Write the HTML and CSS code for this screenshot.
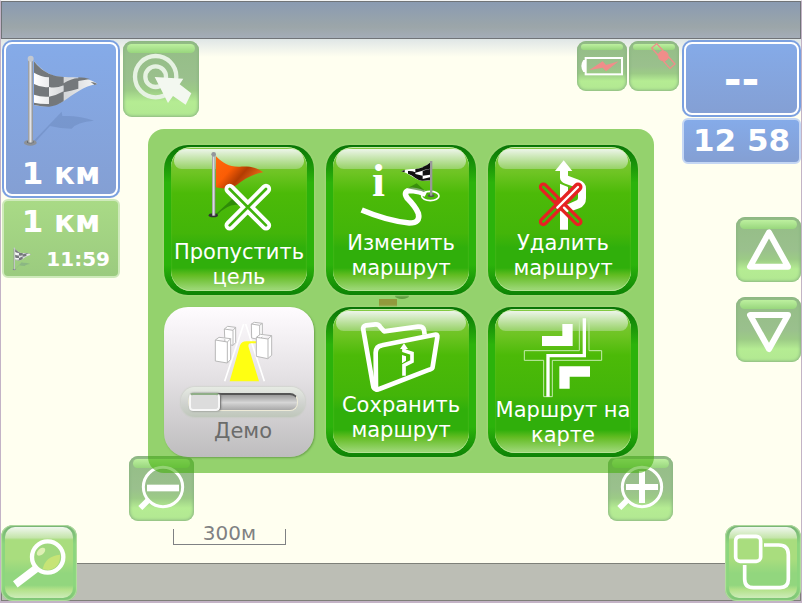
FILE: index.html
```html
<!DOCTYPE html>
<html lang="ru">

<head>
    <meta charset="UTF-8">
    <meta name="viewport" content="width=device-width, initial-scale=1.0">
    <title>Навигатор</title>
    <link rel="stylesheet" href="styles.css">
</head>

<body>
    <svg class="defs" aria-hidden="true">
        <defs>
            <linearGradient id="pole" x1="0" x2="1" y1="0" y2="0">
                <stop offset="0" stop-color="#8c9094" />
                <stop offset="0.5" stop-color="#e4e4e6" />
                <stop offset="1" stop-color="#85898d" />
            </linearGradient>
            <linearGradient id="orange" x1="0" x2="1" y1="0" y2="0.6">
                <stop offset="0" stop-color="#ff6a0c" />
                <stop offset="0.4" stop-color="#fb5d05" />
                <stop offset="0.65" stop-color="#b23c02" />
                <stop offset="1" stop-color="#f0721c" />
            </linearGradient>
            <linearGradient id="cloth" x1="0" x2="1" y1="0" y2="0">
                <stop offset="0" stop-color="#ffffff" />
                <stop offset="0.5" stop-color="#d4d6d8" />
                <stop offset="1" stop-color="#f6f6f6" />
            </linearGradient>
            <symbol id="race-flag" viewBox="66 160 234 285">
                <path d="M98 426 L185 335 L187 348 Q240 346 282 362 Q230 366 215 386 Q180 386 150 378 L104 428Z" fill="#48618f" opacity="0.2" />
                <ellipse cx="91" cy="428" rx="19" ry="9" fill="#8d9196" />
                <ellipse cx="91" cy="426" rx="10" ry="4" fill="#565c62" />
                <rect x="84" y="176" width="15" height="252" fill="url(#pole)" />
                <circle cx="92" cy="176" r="9" fill="#c3c8d0" />
                <path d="M102 184 C120 204 138 220 165 229 C205 236 255 224 292 252 C250 258 220 284 190 304 C165 320 130 322 102 315Z" fill="url(#cloth)" />
                <path d="M102 184 Q122 210 147 221 L147 232 Q122 230 102 218Z M147 221 Q168 231 191 231 L191 256 Q168 266 147 261Z M102 252 Q124 264 147 261 L147 290 Q124 292 102 284Z M147 290 Q170 286 191 274 L191 303 Q170 318 147 320Z M191 250 Q212 236 235 234 L235 266 Q212 272 191 277Z M235 232 Q256 232 270 237 Q254 240 235 243Z M272 246 Q284 246 292 252 L284 255Z M102 308 Q124 313 147 312 L147 320 Q124 320 102 315Z" fill="#74787b" />
            </symbol>
        </defs>
    </svg>

    <div class="screen">
        <header class="top-bar"></header>

        <main class="map">
            <svg class="map-objects" width="40" height="20" viewBox="0 0 40 20" aria-hidden="true">
                <rect x="1" y="7" width="18" height="13" fill="#fb8080" />
                <ellipse cx="24" cy="4" rx="7" ry="3" fill="#8a8a8a" />
            </svg>

            <div class="map-top">
                <section class="route-info">
                    <div class="card framed target-card">
                        <svg class="target-flag" viewBox="6 120 354 351"><use href="#race-flag" x="66" y="160" width="234" height="285" /></svg>
                        <div class="big">1 км</div>
                    </div>
                    <div class="card green finish-card">
                        <div class="big">1 км</div>
                        <div class="arrival">
                            <svg class="arrival-flag"><use href="#race-flag" /></svg>
                            <span>11:59</span>
                        </div>
                    </div>
                </section>

                <button class="glass" aria-label="Цель">
                    <svg width="76" height="76" viewBox="369 123 228 228">
                        <g fill="none" stroke="#e6f2e2" stroke-width="13">
                            <circle cx="467" cy="230" r="62" />
                            <circle cx="467" cy="230" r="31" />
                        </g>
                        <path d="M464 231 L550 236 L539 253 L574 280 L557 314 L519 288 L504 309Z" fill="#f3f8f0" />
                    </svg>
                </button>

                <div class="status">
                    <button class="glass" aria-label="Батарея">
                        <svg width="50" height="50" viewBox="51 123 150 150">
                            <rect x="77" y="174" width="109" height="49" fill="none" stroke="#fff" stroke-width="6" />
                            <path d="M78 180 H70 Q58 198 70 216 H78Z" fill="#fff" />
                            <path d="M87 211 L128 184 L138 195 L176 184 L138 214 L128 203Z" fill="#f08d8a" />
                        </svg>
                    </button>
                    <button class="glass" aria-label="Спутники">
                        <svg width="50" height="50" viewBox="207 123 150 150">
                            <g transform="rotate(48 310 168)" fill="none" stroke="#f08d8a" stroke-width="4">
                                <rect x="269" y="158" width="28" height="20" />
                                <rect x="323" y="158" width="28" height="20" />
                                <circle cx="310" cy="168" r="14" fill="#f08d8a" />
                            </g>
                        </svg>
                    </button>
                </div>

                <section class="clock-info">
                    <div class="card framed speed-card">--</div>
                    <div class="card blue clock-card big">12 58</div>
                    <div class="scroll">
                        <button class="glass" aria-label="Вверх">
                            <svg width="65" height="65" viewBox="48 36 195 195">
                                <path d="M147 82 L90 185 H204Z" fill="none" stroke="#fff" stroke-width="18" stroke-linejoin="round" />
                            </svg>
                        </button>
                        <button class="glass" aria-label="Вниз">
                            <svg width="65" height="65" viewBox="48 276 195 195">
                                <path d="M147 432 L90 330 H204Z" fill="none" stroke="#fff" stroke-width="18" stroke-linejoin="round" />
                            </svg>
                        </button>
                    </div>
                </section>
            </div>

            <div class="map-bottom">
                <div class="zoom">
                    <button class="glass" aria-label="Уменьшить">
                        <svg width="65" height="65" viewBox="57 18 195 195">
                            <circle cx="159" cy="111" r="59" fill="none" stroke="#fff" stroke-width="9" />
                            <path d="M111 114 H207" stroke="#fff" stroke-width="20" />
                            <path d="M116 149 L91 174" stroke="#fff" stroke-width="17" />
                        </svg>
                    </button>
                    <button class="glass" aria-label="Увеличить">
                        <svg width="65" height="65" viewBox="24 18 195 195">
                            <circle cx="126" cy="111" r="59" fill="none" stroke="#fff" stroke-width="9" />
                            <path d="M78 111 H174 M126 63 V159" stroke="#fff" stroke-width="18" />
                            <path d="M83 149 L58 174" stroke="#fff" stroke-width="17" />
                        </svg>
                    </button>
                </div>
                <div class="scale">300м</div>
            </div>
        </main>

        <footer class="bottom-bar"></footer>

        <button class="corner corner-left" aria-label="Поиск">
            <svg width="76" height="76" viewBox="3 45 228 228">
                <path d="M108 176 L46 223" stroke="#fff" stroke-width="23" />
                <circle cx="143" cy="141" r="47" fill="#a0d87e" stroke="#fff" stroke-width="13" />
                <path d="M128 178 Q136 138 180 134 Q182 172 146 180Z" fill="#c7e476" />
                <ellipse cx="123" cy="125" rx="15" ry="9" transform="rotate(-42 123 125)" fill="#def0b4" />
            </svg>
        </button>
        <button class="corner corner-right" aria-label="Карты">
            <svg width="76" height="76" viewBox="375 225 228 228">
                <g fill="none" stroke="#fff" stroke-width="11">
                    <rect x="407" y="259" width="75" height="75" rx="13" />
                    <path d="M492 285 H536 Q565 285 565 314 V388 Q565 413 540 413 H460 Q434 413 434 387 V345" />
                </g>
            </svg>
        </button>

        <nav class="panel">
            <button class="tile">
                <svg class="icon-tall" viewBox="57 60 450 285">
                    <path d="M207 272 L262 222 Q300 224 312 228 L280 240 Q250 234 214 272Z" fill="#1c6d08" opacity="0.6" />
                    <ellipse cx="205" cy="271" rx="14" ry="6" fill="#333" />
                    <rect x="201" y="90" width="10" height="182" fill="url(#pole)" />
                    <circle cx="206" cy="88" r="7" fill="#93979b" />
                    <path d="M213 94 C235 116 252 126 285 125 C312 124 334 126 355 142 C322 147 296 164 276 179 C258 193 232 192 213 187Z" fill="url(#orange)" />
                    <path d="M254 192 L363 301 M363 192 L254 301" stroke="#fff" stroke-width="31" stroke-linecap="round" />
                    <path d="M254 192 L363 301 M363 192 L254 301" stroke="#40b20c" stroke-width="8" stroke-linecap="round" />
                </svg>
                <span>Пропустить цель</span>
            </button>
            <button class="tile">
                <svg class="icon" viewBox="18 30 450 258">
                    <text class="info-letter" x="156" y="183">i</text>
                    <path d="M125 225 Q200 257 268 264 Q302 264 295 235 Q286 214 262 190 Q246 166 276 166 Q300 168 318 178" fill="none" stroke="#fff" stroke-width="17" />
                    <path d="M262 160 L290 145 L326 178 L304 168Z" fill="#246f08" opacity="0.6" />
                    <ellipse cx="331" cy="183" rx="26" ry="14" fill="none" stroke="#fff" stroke-width="5" />
                    <ellipse cx="333" cy="182" rx="10" ry="4" fill="#555" />
                    <rect x="330" y="78" width="7" height="104" fill="#999" />
                    <path d="M330 83 Q306 102 278 102 Q258 101 243 109 Q264 114 278 125 Q300 142 330 136Z" fill="#fff" />
                    <path d="M330 83 Q320 92 308 96 V106 L330 101Z M308 97 Q296 102 286 102 V113 L308 107Z M286 112 Q276 107 264 108 V116 Q276 120 286 129Z M308 107 L330 102 V119 L308 122Z M308 122 L286 117 V129 Q298 138 308 137Z M308 132 L330 127 V136 L308 137Z M254 105 Q247 107 243 109 L254 112Z" fill="#111" />
                </svg>
                <span>Изменить маршрут</span>
            </button>
            <button class="tile">
                <svg class="icon" viewBox="24 30 450 258">
                    <path d="M251 76 L277 108 H264 V122 L296 134 Q318 142 318 160 V190 Q318 212 298 220 L264 232 V284 H240 V218 L290 196 Q294 194 294 188 V168 Q294 160 286 157 L256 146 Q241 140 240 128 V108 H225Z" fill="#fff" />
                    <path d="M240 146 L264 156 V188 L240 202Z" fill="#fff" />
                    <path d="M190 156 L294 260 M294 156 L190 260" stroke="#e62222" stroke-width="27" stroke-linecap="round" />
                    <path d="M190 156 L226 192 M258 224 L294 260 M190 260 L226 224" stroke="#42b50b" stroke-width="8" stroke-linecap="round" />
                    <path d="M232 218 L294 156 M252 218 L262 228" stroke="#fff" stroke-width="7" stroke-linecap="round" />
                </svg>
                <span>Удалить маршрут</span>
            </button>
            <div class="tile demo">
                <svg class="demo-icon" viewBox="57 21 450 240">
                    <path d="M239 244 L296 72 M358 244 L302 72" fill="none" stroke="#fff" stroke-width="5" />
                    <path d="M254 244 L285 136 Q290 124 304 124 H345 V130 H318 Q308 130 311 142 L342 244Z" fill="#ffff12" />
                    <g fill="#fff" stroke="#b9b9b9" stroke-width="3" stroke-linejoin="round">
                        <path d="M238 87 L248 79 L272 82 V128 L264 136 L240 132Z M238 87 L264 91 L272 82 M264 91 V136" />
                        <path d="M319 72 L328 67 L352 70 V110 L344 119 L320 114Z M319 72 L344 76 L352 70 M344 76 V119" />
                        <path d="M211 120 L222 112 L257 116 V178 L247 189 L211 183Z M211 120 L247 126 L257 116 M247 126 V189" />
                        <path d="M334 112 L346 103 L380 107 V166 L368 176 L334 169Z M334 112 L369 117 L380 107 M369 117 V176" />
                    </g>
                </svg>
                <div class="demo-control">
                    <input class="speed" id="demo-speed" type="range" min="0" max="100" value="0">
                    <label for="demo-speed">Демо</label>
                </div>
            </div>
            <button class="tile">
                <svg class="icon" viewBox="18 21 450 258">
                    <g fill="none" stroke="#fff" stroke-width="14" stroke-linejoin="round">
                        <path d="M168 268 Q160 266 159 255 L130 90 Q128 78 138 76 L166 73 Q176 72 180 80 L192 94 L294 80 Q310 79 312 90 L314 104" />
                        <path d="M168 268 L167 158 Q168 138 186 136 L344 104 Q354 102 352 112 L338 200 Q338 206 328 209 L178 267 Q172 270 168 268Z" />
                    </g>
                    <path d="M252 142 V152 L276 160 V184 L252 196 V227" fill="none" stroke="#fff" stroke-width="11" />
                    <path d="M252 130 L264 147 H240Z M246 165 L258 169 V182 L246 190Z" fill="#fff" />
                </svg>
                <span>Сохранить маршрут</span>
            </button>
            <button class="tile">
                <svg class="icon-tall" viewBox="24 21 450 285">
                    <path d="M247 72 H278 V138 H186 V108 H247Z M238 199 H330 V230 H269 V266 H238Z" fill="#fff" />
                    <path d="M298 55 H327 V152 H365 V181 H217 V290 H191 V181 H133 V152 H298Z" fill="none" stroke="#c5ecae" stroke-width="3" />
                    <path d="M313 55 V167 H204 V290" fill="none" stroke="#fff" stroke-width="10" />
                </svg>
                <span>Маршрут на карте</span>
            </button>
        </nav>
    </div>
</body>

</html>
```

FILE: styles.css
```css
* {
    margin: 0;
    padding: 0;
    box-sizing: border-box;
}

body {
    font-family: 'DejaVu Sans', Verdana, sans-serif;
}

button {
    border: none;
    font: inherit;
    color: inherit;
    cursor: pointer;
}

svg {
    display: block;
}

.defs {
    position: absolute;
    width: 0;
    height: 0;
}

.screen {
    position: relative;
    display: flex;
    flex-direction: column;
    min-height: 100vh;
    border: 1px solid #c3b3c6;
    border-top-color: #f4f5f5;
    border-bottom-width: 2px;
}

.top-bar {
    height: 38px;
    border: 1px solid #707478;
    background: linear-gradient(#8a9bb2, #9ca6a9 70%, #a4adb8);
}

.bottom-bar {
    height: 38px;
    border: 1px solid #7e8079;
    background-color: #bcbeb5;
}

/* map */

.map {
    position: relative;
    flex: 1;
    display: flex;
    flex-direction: column;
    justify-content: space-between;
    padding: 1px 0 18px 1px;
    background: linear-gradient(#dfe6e6, #fffff0 18px);
}

.map-objects {
    position: absolute;
    left: calc(50% - 23px);
    top: calc(50% - 9px);
}

.map-top {
    display: flex;
    align-items: flex-start;
    gap: 3px;
}

.map-top > .glass,
.status {
    margin-top: 1px;
}

.route-info {
    display: flex;
    flex-direction: column;
    gap: 1px;
    width: 118px;
}

.clock-info {
    display: flex;
    flex-direction: column;
    gap: 1px;
    width: 119px;
}

.status {
    display: flex;
    gap: 2px;
    margin-left: auto;
}

/* info cards */

.card {
    color: #fff;
    font-weight: bold;
    text-align: center;
    border-radius: 6px;
}

.big {
    font-size: 31px;
    line-height: 32px;
}

.framed {
    border-radius: 10px;
    background: linear-gradient(#85abe9, #849fd3);
    box-shadow: inset 0 0 0 2px #7ba0df, inset 0 0 0 4px #fff;
}

.blue {
    border: 2px solid #c5d7f4;
    background: linear-gradient(#85abe9, #849fd3);
}

.green {
    border: 2px solid #cfeabb;
    background: linear-gradient(#a9da86, #9bcb7f);
}

.target-card {
    height: 158px;
}

.target-flag {
    width: 118px;
    height: 117px;
}

.finish-card {
    height: 79px;
    padding: 4px 8px;
}

.arrival {
    display: flex;
    justify-content: space-between;
    align-items: center;
    margin-top: 8px;
    font-size: 20px;
    line-height: 28px;
}

.arrival-flag {
    width: 20px;
    height: 24px;
}

.speed-card {
    height: 77px;
    font-size: 43px;
    line-height: 78px;
}

.clock-card {
    height: 46px;
    padding: 4px 0;
}

.scroll {
    display: flex;
    flex-direction: column;
    align-items: flex-end;
    gap: 15px;
    margin-top: 52px;
}

/* translucent map buttons */

.glass {
    position: relative;
    border-radius: 9px;
    background: linear-gradient(#94bd86, #9ac08d 50%, #9ccb86 65%, #b5ec93 80%, #b2e892);
    box-shadow: inset 0 0 3px 1px #8bb583;
}

.glass::before {
    content: "";
    position: absolute;
    top: 3px;
    left: 4px;
    right: 4px;
    height: 9px;
    border-radius: 5px;
    background: linear-gradient(#bdf09f, #98d67d);
}

.glass svg {
    position: relative;
}

.status .glass::before {
    height: 6px;
}

.zoom {
    display: flex;
    justify-content: space-between;
    padding: 0 128px 0 127px;
}

.scale {
    position: relative;
    width: 113px;
    height: 24px;
    margin-left: 171px;
    color: #7f8183;
    font-size: 20px;
    line-height: 24px;
    text-align: center;
    border-bottom: 1px solid #7f8183;
}

.scale::before {
    content: "";
    position: absolute;
    left: 0;
    right: 0;
    bottom: 0;
    height: 15px;
    border: solid #7f8183;
    border-width: 0 1px;
}

/* corner buttons over the bottom bar */

.corner {
    position: absolute;
    bottom: 0;
    isolation: isolate;
    border-radius: 12px;
    background: linear-gradient(#72ae72, #8cd67d 25%, #8cd67d 80%, #7cc374);
    box-shadow: inset 0 0 1px 1px #b5dfa0;
}

.corner::before {
    content: "";
    position: absolute;
    z-index: -1;
    inset: 2px 4px 3px;
    border-radius: 10px;
    background: linear-gradient(#f0f7ee, #c5e5ab 15%, #a9dd7e 18%, #a9dd7e 45%, #92d67e 65%, #92d67e 82%, #b2e189 88%, #cdecb9);
}

.corner-left {
    left: 0;
}

.corner-right {
    right: 0;
}

/* route menu */

.panel {
    position: absolute;
    top: 50%;
    left: 50%;
    transform: translate(-50%, -50%);
    display: grid;
    grid-template-columns: repeat(3, 150px);
    grid-auto-rows: 150px;
    gap: 12px;
    padding: 16px;
    border-radius: 16px;
    background-color: rgba(65, 174, 8, 0.56);
}

.tile {
    position: relative;
    isolation: isolate;
    display: flex;
    flex-direction: column;
    align-items: center;
    color: #fff;
    font-size: 21px;
    line-height: 25px;
    text-align: center;
    border-radius: 24px;
    background: linear-gradient(#087406, #2bb30b 25%, #2bb30b 80%, #0d8205);
    box-shadow: 0 0 2px 1px #a3d67a;
}

.tile::before {
    content: "";
    position: absolute;
    z-index: -1;
    inset: 2px 7px 4px;
    border-radius: 20px;
    background: linear-gradient(#86cb44, #6ec423 18%, #4cba08 32%, #43b509 60%, #30af0b 70%, #30af0b 84%, #62bc22 89%, #a3da80);
    box-shadow: inset 0 1px #c5e8a8, inset 0 -1px #b5e394, inset 0 0 2px #5fc430;
}

.tile::after {
    content: "";
    position: absolute;
    z-index: -1;
    top: 4px;
    left: 10px;
    right: 10px;
    height: 20px;
    border-radius: 16px 16px 10px 10px;
    background: linear-gradient(#edf5e9, #97d266);
}

.tile span {
    width: 142px;
}

.icon {
    width: 150px;
    height: 86px;
    flex-shrink: 0;
}

.icon-tall {
    width: 150px;
    height: 95px;
    flex-shrink: 0;
}

.tile:last-child .icon-tall {
    margin-bottom: -4px;
}

.info-letter {
    font-family: 'Liberation Serif', serif;
    font-size: 140px;
    font-weight: bold;
    fill: #fff;
}

.demo {
    color: #6b6c6b;
    background: linear-gradient(#fffcff, #e5e2e5 45%, #bebdbe);
    box-shadow: 1px 1px 2px #6ba34d;
}

.demo::before,
.demo::after {
    content: none;
}

.demo-icon {
    width: 150px;
    height: 80px;
}

.demo-control {
    display: flex;
    flex-direction: column;
    align-items: center;
    gap: 2px;
    padding-left: 8px;
}

.speed {
    appearance: none;
    width: 124px;
    height: 30px;
    padding: 0 7px;
    border-radius: 14px;
    background: linear-gradient(#e6ebe3, #d2d4d1 50%, #bfc7bb);
    box-shadow: 0 0 2px #b7c6ae;
}

.speed::-webkit-slider-runnable-track {
    height: 18px;
    border: 1px solid #eeebd8;
    border-top: 2px solid #555;
    border-radius: 8px;
    background: linear-gradient(#9a9a9a, #d6d6d6 50%, #a8a8a8);
}

.speed::-webkit-slider-thumb {
    appearance: none;
    width: 31px;
    height: 18px;
    margin-top: -2px;
    border: 2px solid #f8f8f8;
    border-top-color: #8fae87;
    border-radius: 4px;
    background-color: #dcdcdc;
    box-shadow: 1px 0 2px #666;
}
```
